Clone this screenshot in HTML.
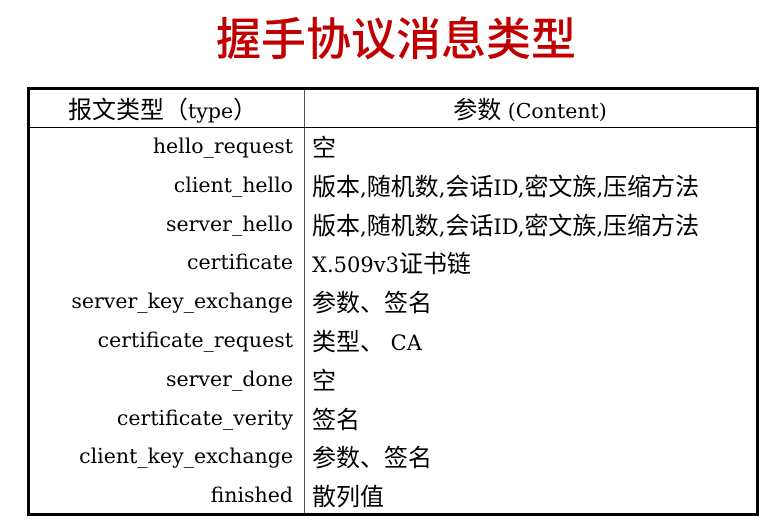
<!DOCTYPE html>
<html><head><meta charset="utf-8"><style>
body{margin:0;width:784px;height:528px;background:#fff;overflow:hidden;font-family:"DejaVu Serif","Noto Sans CJK SC",serif;}
h1{position:absolute;left:4px;width:784px;top:3px;margin:0;text-align:center;font:500 45px "Noto Sans CJK SC",sans-serif;color:#c00000;}
.t{position:absolute;left:27px;top:87px;width:726px;height:423px;border:3px solid #000;}
.v{position:absolute;left:274px;top:0;bottom:0;border-left:1px solid #555;}
.h{position:absolute;left:0;right:0;top:37px;border-top:1px solid #000;}
.r{position:absolute;left:0;right:0;height:38.8px;line-height:38.8px;font-size:20.5px;color:#000;}
.a{position:absolute;right:463px;text-align:right;white-space:nowrap;}
.b{position:absolute;left:282px;white-space:nowrap;font-size:21px;}
i{font-style:normal;font-family:"Noto Sans CJK SC",sans-serif;font-size:24px;}
</style></head><body>
<h1>握手协议消息类型</h1>
<div class="t"><div class="v"></div><div class="h"></div>
<div class="r" style="top:-1px;height:37px;line-height:37px"><span style="position:absolute;left:38px"><i>报文类型（</i>type<i>）</i></span><span style="position:absolute;left:274px;right:0;text-align:center"><i>参数</i> (Content)</span></div>
<div class="r" style="top:37px"><span class="a">hello_request</span><span class="b"><i>空</i></span></div>
<div class="r" style="top:75.8px"><span class="a">client_hello</span><span class="b"><i>版本</i>,<i>随机数</i>,<i>会话</i>ID,<i>密文族</i>,<i>压缩方法</i></span></div>
<div class="r" style="top:114.6px"><span class="a">server_hello</span><span class="b"><i>版本</i>,<i>随机数</i>,<i>会话</i>ID,<i>密文族</i>,<i>压缩方法</i></span></div>
<div class="r" style="top:153.4px"><span class="a">certificate</span><span class="b">X.509v3<i>证书链</i></span></div>
<div class="r" style="top:192.2px"><span class="a">server_key_exchange</span><span class="b"><i>参数、签名</i></span></div>
<div class="r" style="top:231px"><span class="a">certificate_request</span><span class="b"><i>类型、</i> CA</span></div>
<div class="r" style="top:269.8px"><span class="a">server_done</span><span class="b"><i>空</i></span></div>
<div class="r" style="top:308.6px"><span class="a">certificate_verity</span><span class="b"><i>签名</i></span></div>
<div class="r" style="top:347.4px"><span class="a">client_key_exchange</span><span class="b"><i>参数、签名</i></span></div>
<div class="r" style="top:386.2px"><span class="a">finished</span><span class="b"><i>散列值</i></span></div>
</div>
</body></html>
